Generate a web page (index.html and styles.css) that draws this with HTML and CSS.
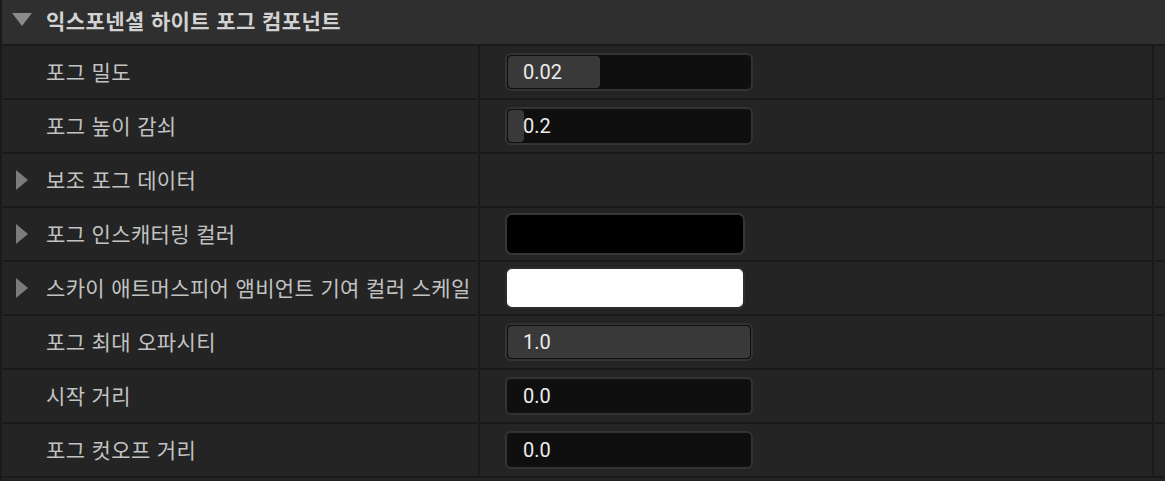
FILE: index.html
```html
<!DOCTYPE html>
<html lang="ko">
<head>
<meta charset="utf-8">
<link rel="stylesheet" href="styles.css">
</head>
<body>
<div class="panel">
  <div class="header">
    <svg class="caret-down" width="20" height="13" viewBox="0 0 20 13"><polygon points="0,0 20,0 10,13" /></svg>
    <span class="title">익스포넨셜 하이트 포그 컴포넌트</span>
  </div>

  <div class="row">
    <div class="label"><span class="text">포그 밀도</span></div>
    <div class="value">
      <div class="numbox"><div class="fill" style="width: 92px"></div><span class="num">0.02</span></div>
    </div>
    <div class="extra"></div>
  </div>

  <div class="row">
    <div class="label"><span class="text">포그 높이 감쇠</span></div>
    <div class="value">
      <div class="numbox"><div class="fill" style="width: 16px"></div><span class="num">0.2</span></div>
    </div>
    <div class="extra"></div>
  </div>

  <div class="row">
    <div class="label"><svg class="caret" width="12" height="20" viewBox="0 0 12 20"><polygon points="0,0 12,10 0,20" /></svg><span class="text">보조 포그 데이터</span></div>
    <div class="value"></div>
    <div class="extra"></div>
  </div>

  <div class="row">
    <div class="label"><svg class="caret" width="12" height="20" viewBox="0 0 12 20"><polygon points="0,0 12,10 0,20" /></svg><span class="text">포그 인스캐터링 컬러</span></div>
    <div class="value"><div class="swatch black"></div></div>
    <div class="extra"></div>
  </div>

  <div class="row">
    <div class="label"><svg class="caret" width="12" height="20" viewBox="0 0 12 20"><polygon points="0,0 12,10 0,20" /></svg><span class="text">스카이 애트머스피어 앰비언트 기여 컬러 스케일</span></div>
    <div class="value"><div class="swatch white"></div></div>
    <div class="extra"></div>
  </div>

  <div class="row">
    <div class="label"><span class="text">포그 최대 오파시티</span></div>
    <div class="value">
      <div class="numbox"><div class="fill full"></div><span class="num">1.0</span></div>
    </div>
    <div class="extra"></div>
  </div>

  <div class="row">
    <div class="label"><span class="text">시작 거리</span></div>
    <div class="value">
      <div class="numbox"><span class="num">0.0</span></div>
    </div>
    <div class="extra"></div>
  </div>

  <div class="row">
    <div class="label"><span class="text">포그 컷오프 거리</span></div>
    <div class="value">
      <div class="numbox"><span class="num">0.0</span></div>
    </div>
    <div class="extra"></div>
  </div>

  <div class="bottom"></div>
</div>
</body>
</html>
```

FILE: styles.css
```css
html, body {
  margin: 0;
  padding: 0;
  background: #1a1a1a;
  width: 1165px;
  height: 481px;
  overflow: hidden;
}

.panel {
  display: flex;
  flex-direction: column;
  gap: 2px;
  padding-left: 2px;
  font-family: "Noto Sans CJK KR", "Noto Sans", sans-serif;
}

.header {
  height: 44px;
  background: #2f2f2f;
  display: flex;
  align-items: center;
  padding-left: 10px;
}

.caret-down {
  fill: #8a8a8a;
  margin-right: 14px;
  margin-top: -6px;
}

.title {
  font-size: 21px;
  letter-spacing: 0.4px;
  font-weight: 700;
  color: #d2d2d2;
  line-height: 1;
  margin-top: -4px;
}

.row {
  display: grid;
  grid-template-columns: 476px 672px 11px;
  gap: 2px;
  height: 52px;
}

.label, .value, .extra {
  background: #242424;
}

.label {
  display: flex;
  align-items: center;
  padding-left: 44px;
  position: relative;
}

.caret {
  position: absolute;
  left: 14px;
  top: 16px;
  fill: #7c7c7c;
}

.text {
  font-size: 21px;
  letter-spacing: 0.35px;
  color: #c2c2c2;
  line-height: 1;
  white-space: nowrap;
  margin-top: -2px;
}

.value {
  display: flex;
  align-items: center;
  padding-left: 25px;
}

.numbox {
  position: relative;
  width: 244px;
  height: 34px;
  background: #0f0f0f;
  border: 2px solid #333333;
  border-radius: 6px;
  display: flex;
  align-items: center;
  margin-top: -1px;
}

.fill {
  position: absolute;
  left: 1px;
  top: 1px;
  bottom: 1px;
  background: #393939;
  border-radius: 4px;
}

.fill.full {
  right: 1px;
}

.num {
  position: relative;
  font-family: Roboto, "Liberation Sans", sans-serif;
  font-size: 20px;
  color: #ececec;
  padding-left: 16px;
  line-height: 1;
}

.swatch {
  width: 236px;
  height: 38px;
  border: 2px solid #363636;
  border-radius: 7px;
}

.swatch.black {
  background: #000000;
}

.swatch.white {
  background: #ffffff;
  border-color: #2e2e2e;
}

.bottom {
  height: 10px;
  background: #232323;
}
```
